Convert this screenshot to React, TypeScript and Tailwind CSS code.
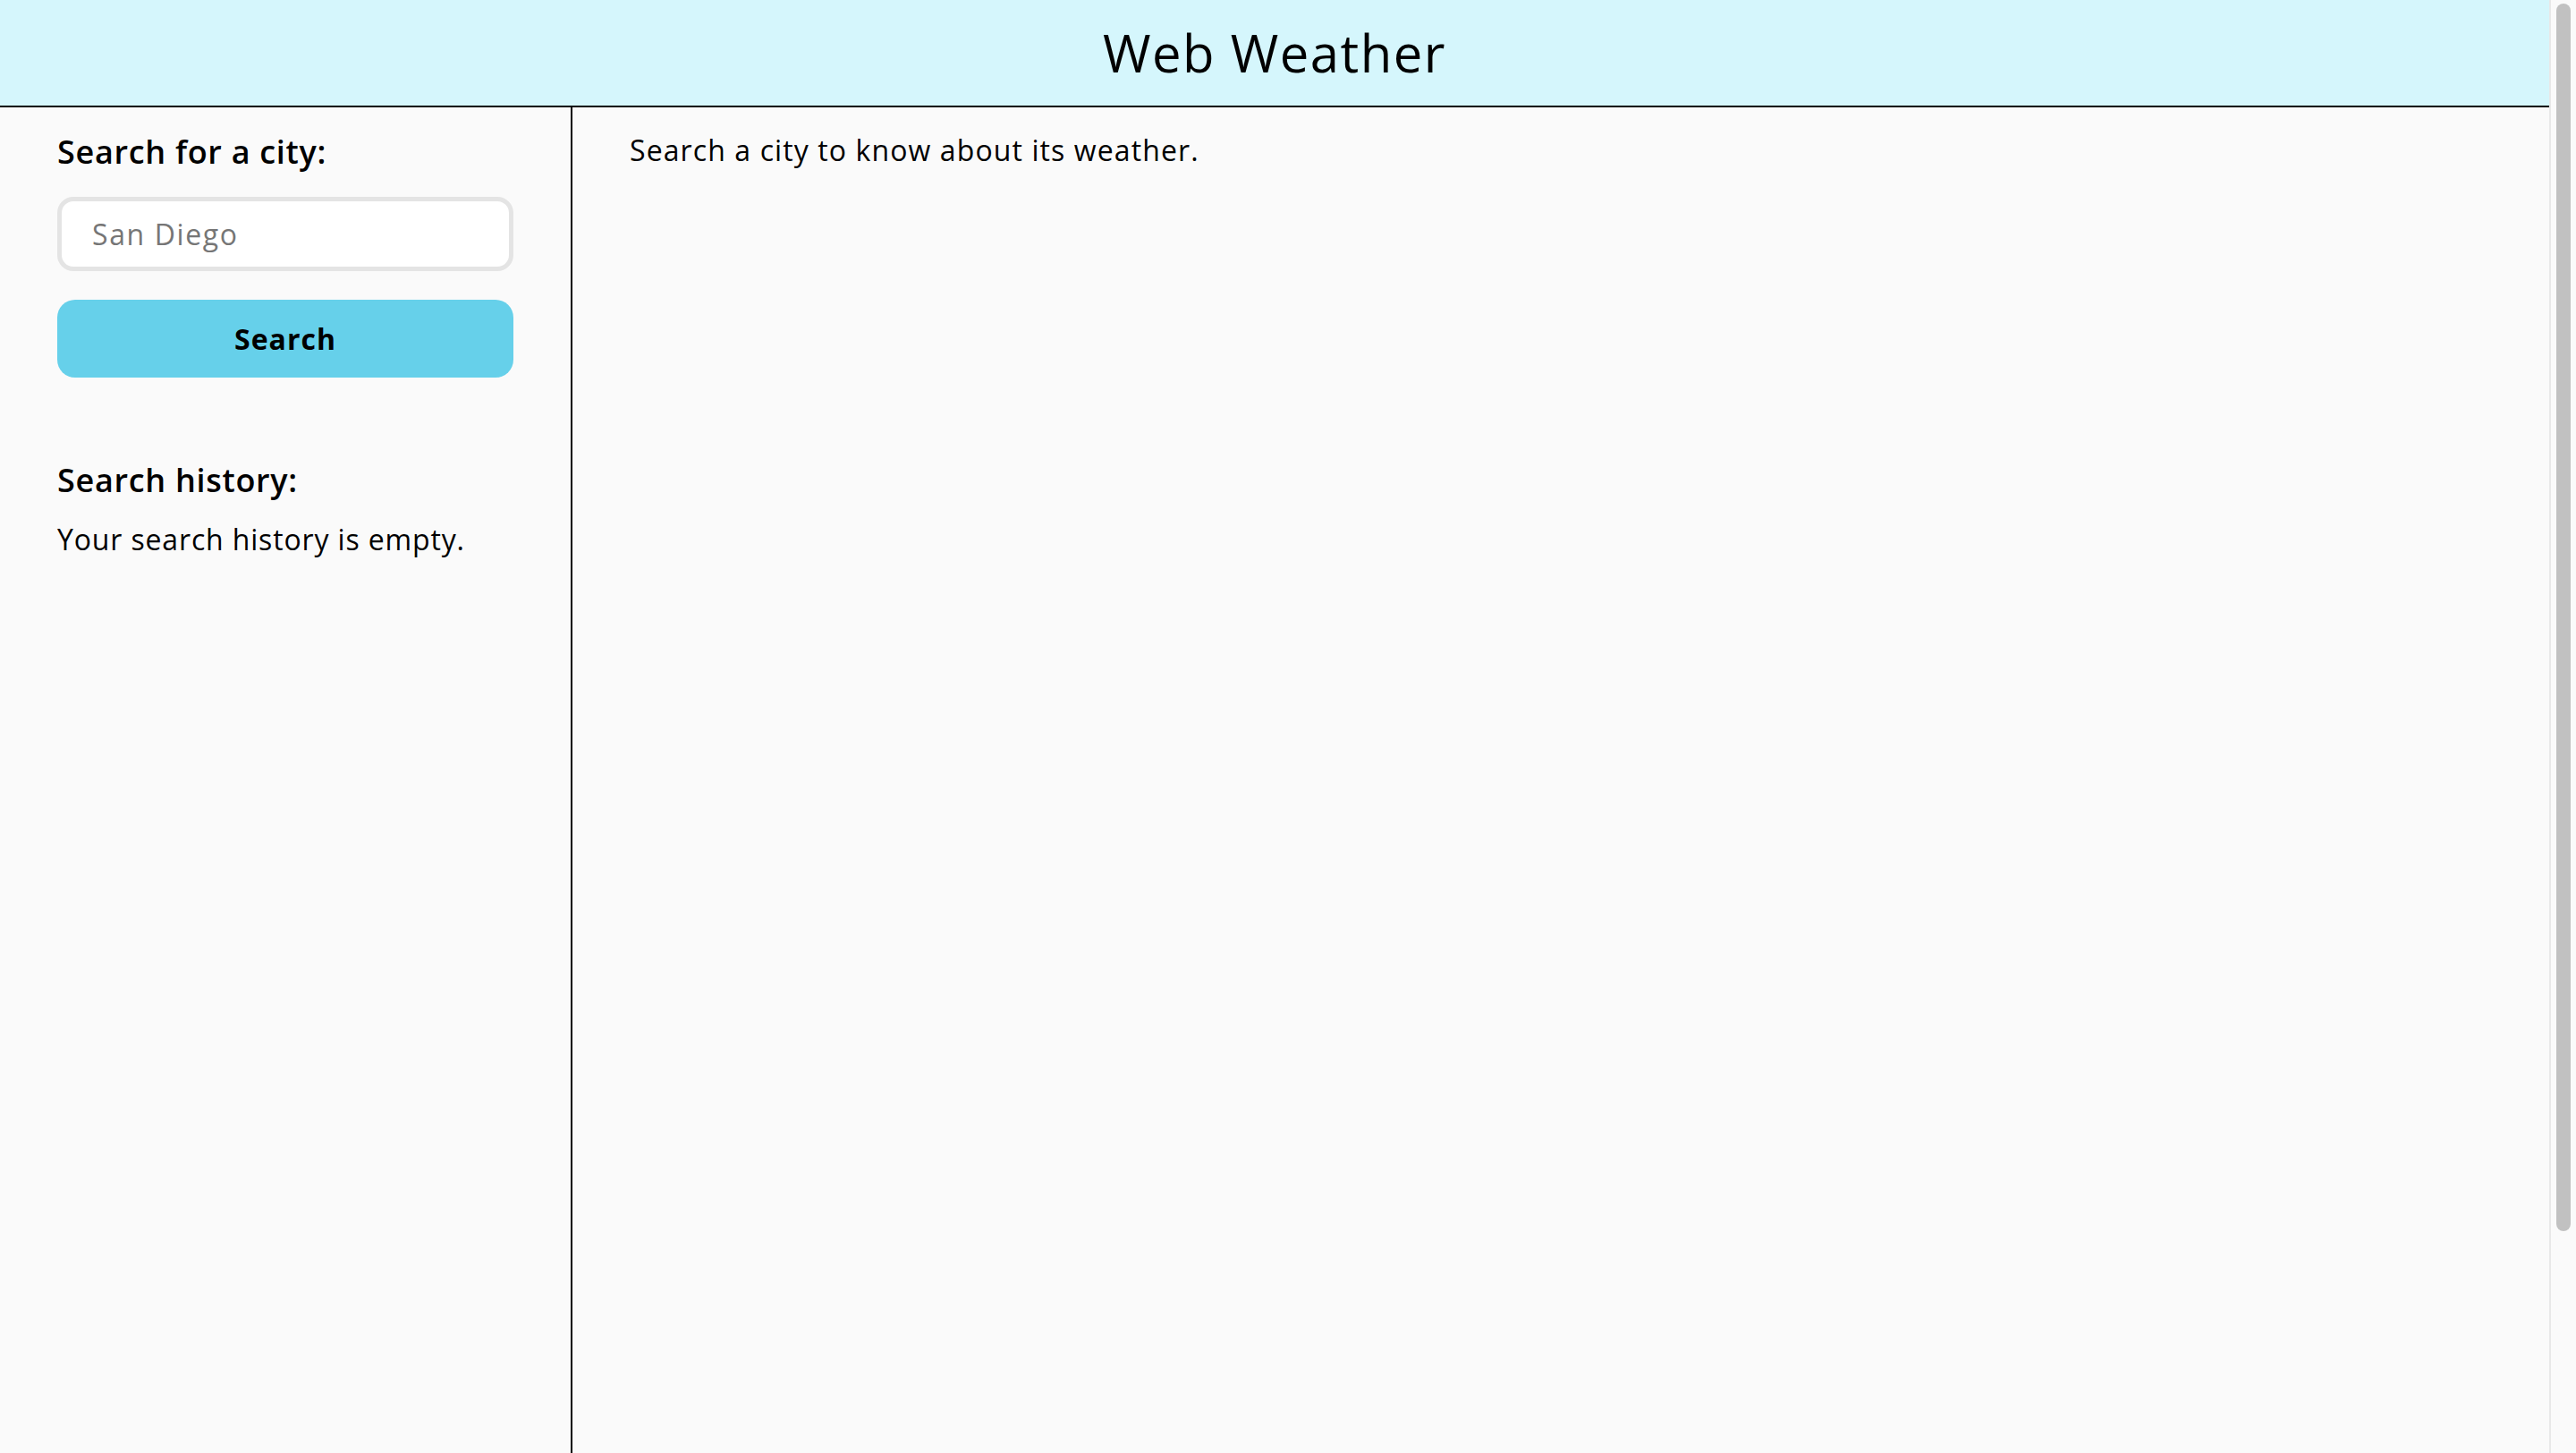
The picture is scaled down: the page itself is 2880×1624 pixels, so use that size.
export default function App() {
  return (
    <div className="flex h-screen overflow-hidden bg-[#fafafa] font-['Open_Sans',sans-serif] tracking-[0.8px] text-black">
      <div className="min-w-0 flex-1">
        <header className="flex h-[120px] items-center justify-center border-b-2 border-black bg-[#d5f6fc]">
          <h1 className="text-[58px] leading-none font-normal tracking-[1.5px]">Web Weather</h1>
        </header>

        <div className="flex min-h-[1800px]">
          <aside className="w-[640px] shrink-0 border-r-2 border-black px-16 pt-8">
            <h2 className="text-[36px] leading-none font-semibold tracking-[0.7px]">Search for a city:</h2>
            <form className="mt-8 flex flex-col gap-8" onSubmit={(e) => e.preventDefault()}>
              <input
                type="text"
                placeholder="San Diego"
                className="h-[83px] w-full rounded-[18px] border-[5px] border-[#e4e4e4] bg-white pl-[34px] text-[32px] tracking-[1.6px] outline-none placeholder:text-[#767676]"
              />
              <button
                type="submit"
                className="h-[87px] w-full rounded-[20px] bg-[#66d0ea] text-[32px] leading-none font-bold tracking-[1px]"
              >
                Search
              </button>
            </form>

            <h2 className="mt-[97px] text-[36px] leading-none font-semibold tracking-[0.7px]">Search history:</h2>
            <p className="mt-8 text-[32px] leading-none tracking-[0.85px]">Your search history is empty.</p>
          </aside>

          <main className="flex-1 px-16 pt-8">
            <p className="text-[32px] leading-none tracking-[1.1px]">Search a city to know about its weather.</p>
          </main>
        </div>
      </div>

      {/* page scrollbar, as in the screenshot */}
      <div className="w-[30px] shrink-0 border-l-2 border-[#e8e8e8] bg-[#fafafa] pt-1 pl-[6px]">
        <div className="h-[1372px] w-4 rounded-full bg-[#c1c1c1]" />
      </div>
    </div>
  );
}
